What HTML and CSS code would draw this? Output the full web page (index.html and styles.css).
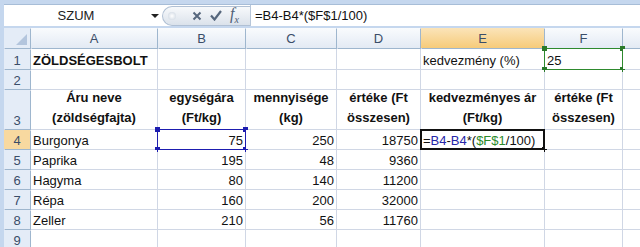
FILE: index.html
```html
<!DOCTYPE html>
<html lang="hu">
<head>
  <meta charset="UTF-8">
  <title>Zöldségesbolt</title>
  <link rel="stylesheet" href="styles.css">
</head>
<body>
  <div class="excel">
    <div class="formula-bar">
      <div class="name-box">SZUM</div>
      <span class="name-arrow"></span>
      <div class="fx-pill">
        <span class="pill-knob"></span>
        <svg class="icon-x" width="10" height="10" viewBox="0 0 10 10"><path d="M1.5 1.5 L8.5 8.5 M8.5 1.5 L1.5 8.5" stroke="#56677d" stroke-width="2" fill="none"/></svg>
        <svg class="icon-ok" width="12" height="11" viewBox="0 0 12 11"><path d="M1 5.5 L4.5 9.5 L11 1" stroke="#56677d" stroke-width="2.2" fill="none"/></svg>
        <span class="icon-fx">f<sub>x</sub></span>
      </div>
      <div class="formula-input">=B4-B4*($F$1/100)</div>
    </div>

    <div class="sheet">
      <!-- column headers -->
      <div class="ch corner"></div>
      <div class="ch">A</div>
      <div class="ch">B</div>
      <div class="ch">C</div>
      <div class="ch">D</div>
      <div class="ch active">E</div>
      <div class="ch">F</div>
      <div class="ch"></div>

      <!-- row 1 -->
      <div class="rh">1</div>
      <div class="c bold">ZÖLDSÉGESBOLT</div>
      <div class="c"></div>
      <div class="c"></div>
      <div class="c"></div>
      <div class="c">kedvezmény (%)</div>
      <div class="c">25
        <div class="sel sel-green"><span class="h tl"></span><span class="h tr"></span><span class="h bl"></span><span class="h br"></span></div>
      </div>
      <div class="c"></div>

      <!-- row 2 -->
      <div class="rh">2</div>
      <div class="c"></div><div class="c"></div><div class="c"></div><div class="c"></div><div class="c"></div><div class="c"></div><div class="c"></div>

      <!-- row 3 -->
      <div class="rh">3</div>
      <div class="c head">Áru neve<br>(zöldségfajta)</div>
      <div class="c head">egységára<br>(Ft/kg)</div>
      <div class="c head">mennyisége<br>(kg)</div>
      <div class="c head">értéke (Ft<br>összesen)</div>
      <div class="c head">kedvezményes ár<br>(Ft/kg)</div>
      <div class="c head">értéke (Ft<br>összesen)</div>
      <div class="c"></div>

      <!-- row 4 -->
      <div class="rh active">4</div>
      <div class="c">Burgonya</div>
      <div class="c num">75
        <div class="sel sel-blue"><span class="h tl"></span><span class="h tr"></span><span class="h bl"></span><span class="h br"></span></div>
      </div>
      <div class="c num">250</div>
      <div class="c num">18750</div>
      <div class="c edit">=<span class="ref1">B4</span>-<span class="ref1">B4</span>*(<span class="ref2">$F$1</span>/100)
        <div class="sel sel-edit"><span class="h br"></span></div>
      </div>
      <div class="c"></div>
      <div class="c"></div>

      <!-- row 5 -->
      <div class="rh">5</div>
      <div class="c">Paprika</div>
      <div class="c num">195</div>
      <div class="c num">48</div>
      <div class="c num">9360</div>
      <div class="c"></div><div class="c"></div><div class="c"></div>

      <!-- row 6 -->
      <div class="rh">6</div>
      <div class="c">Hagyma</div>
      <div class="c num">80</div>
      <div class="c num">140</div>
      <div class="c num">11200</div>
      <div class="c"></div><div class="c"></div><div class="c"></div>

      <!-- row 7 -->
      <div class="rh">7</div>
      <div class="c">Répa</div>
      <div class="c num">160</div>
      <div class="c num">200</div>
      <div class="c num">32000</div>
      <div class="c"></div><div class="c"></div><div class="c"></div>

      <!-- row 8 -->
      <div class="rh">8</div>
      <div class="c">Zeller</div>
      <div class="c num">210</div>
      <div class="c num">56</div>
      <div class="c num">11760</div>
      <div class="c"></div><div class="c"></div><div class="c"></div>

      <!-- row 9 -->
      <div class="rh">9</div>
      <div class="c"></div><div class="c"></div><div class="c"></div><div class="c"></div><div class="c"></div><div class="c"></div><div class="c"></div>
    </div>
  </div>
</body>
</html>
```

FILE: styles.css
```css
body {
  margin: 0;
  background: #c5d7ee;
  font-family: "Liberation Sans", Arial, sans-serif;
  overflow: hidden;
}

.excel {
  /*blue frame around the bar and the sheet*/
  padding: 4px 0 0 4px;
  height: 247px;
  box-sizing: border-box;
}

/*Formula bar section*/
.formula-bar {
  display: flex;
  align-items: center;
  height: 22px;
  margin-bottom: 2px;
  background: #fff;
  border-top: 1px solid #a7bdd7;
  box-sizing: border-box;
}

.name-box {
  width: 144px;
  text-align: center;
  font-size: 13px;
  color: #222;
}

.name-arrow {
  width: 0;
  height: 0;
  margin-left: 3px;
  border-left: 4px solid transparent;
  border-right: 4px solid transparent;
  border-top: 4px solid #222;
}

.fx-pill {
  display: flex;
  align-items: center;
  width: 88px;
  height: 20px;
  margin-left: 3px;
  box-sizing: border-box;
  background: linear-gradient(#f7f9fb, #dbe2eb);
  border: 1px solid #b0c0d4;
  border-right: none;
  border-radius: 11px 0 0 11px;
}

.pill-knob {
  width: 8px;
  height: 8px;
  margin-left: 5px;
  border-radius: 50%;
  background: radial-gradient(#ffffff, #c9d3df);
}

.icon-x {
  margin-left: 16px;
}

.icon-ok {
  margin-left: 8px;
}

.icon-fx {
  margin-left: 8px;
  font-family: "Liberation Serif", serif;
  font-style: italic;
  font-size: 16px;
  color: #4f6076;
  line-height: 1;
}

.icon-fx sub {
  font-size: 10px;
}

.formula-input {
  flex: 1;
  height: 100%;
  padding-left: 4px;
  border-left: 1px solid #b7c6d9;
  font-size: 13px;
  line-height: 21px;
  color: #111;
}

/*Sheet grid section*/
.sheet {
  display: grid;
  grid-template-columns: 26px 126px 87px 90px 83px 123px 77px 1fr;
  grid-template-rows: 20px 20px 19px 39px repeat(6, 19px);
  gap: 1px;
  background: #d0d7e5;
}

.ch,
.rh {
  display: flex;
  justify-content: center;
  font-size: 13px;
  color: #3a4d68;
  box-shadow: 1px 1px 0 #9eb6ce;
}

.ch {
  align-items: center;
  background: linear-gradient(#f9fbfd, #e3eaf4);
}

.ch.active {
  background: linear-gradient(#fbe4b9, #f6cb7a);
}

.rh {
  align-items: flex-end;
  padding-bottom: 1px;
  background: #e4ecf7;
}

.rh.active {
  background: #f8d9a0;
}

.corner {
  position: relative;
  background: #e4ecf7;
}

.corner::after {
  content: "";
  position: absolute;
  right: 3px;
  bottom: 3px;
  border-left: 11px solid transparent;
  border-bottom: 11px solid #b3c5dd;
}

.c {
  position: relative;
  display: flex;
  align-items: flex-end;
  padding: 0 2px 1px;
  background: #fff;
  font-size: 13px;
  color: #111;
  white-space: nowrap;
}

.bold {
  font-weight: bold;
}

.num {
  justify-content: flex-end;
}

.head {
  justify-content: center;
  text-align: center;
  font-weight: bold;
  line-height: 20px;
}

.edit {
  padding-left: 2px;
}

.ref1 {
  color: #2626a8;
}

.ref2 {
  color: #2c8a2c;
}

/*selection frames*/
.sel {
  position: absolute;
  top: -1px;
  left: -1px;
  right: -1px;
  bottom: -1px;
}

.sel-blue {
  border: 1px solid #1d1db0;
}

.sel-green {
  border: 1px solid #2e8a2e;
}

.sel-edit {
  border: 2px solid #111;
}

.h {
  position: absolute;
  width: 5px;
  height: 5px;
}

.sel-blue .h {
  background: #1d1db0;
}

.sel-green .h {
  background: #2a7a2a;
}

.sel-edit .h {
  background: #111;
  right: -4px;
  bottom: -4px;
}

.tl { left: -3px; top: -3px; }
.tr { right: -3px; top: -3px; }
.bl { left: -3px; bottom: -3px; }
.br { right: -3px; bottom: -3px; }
```
